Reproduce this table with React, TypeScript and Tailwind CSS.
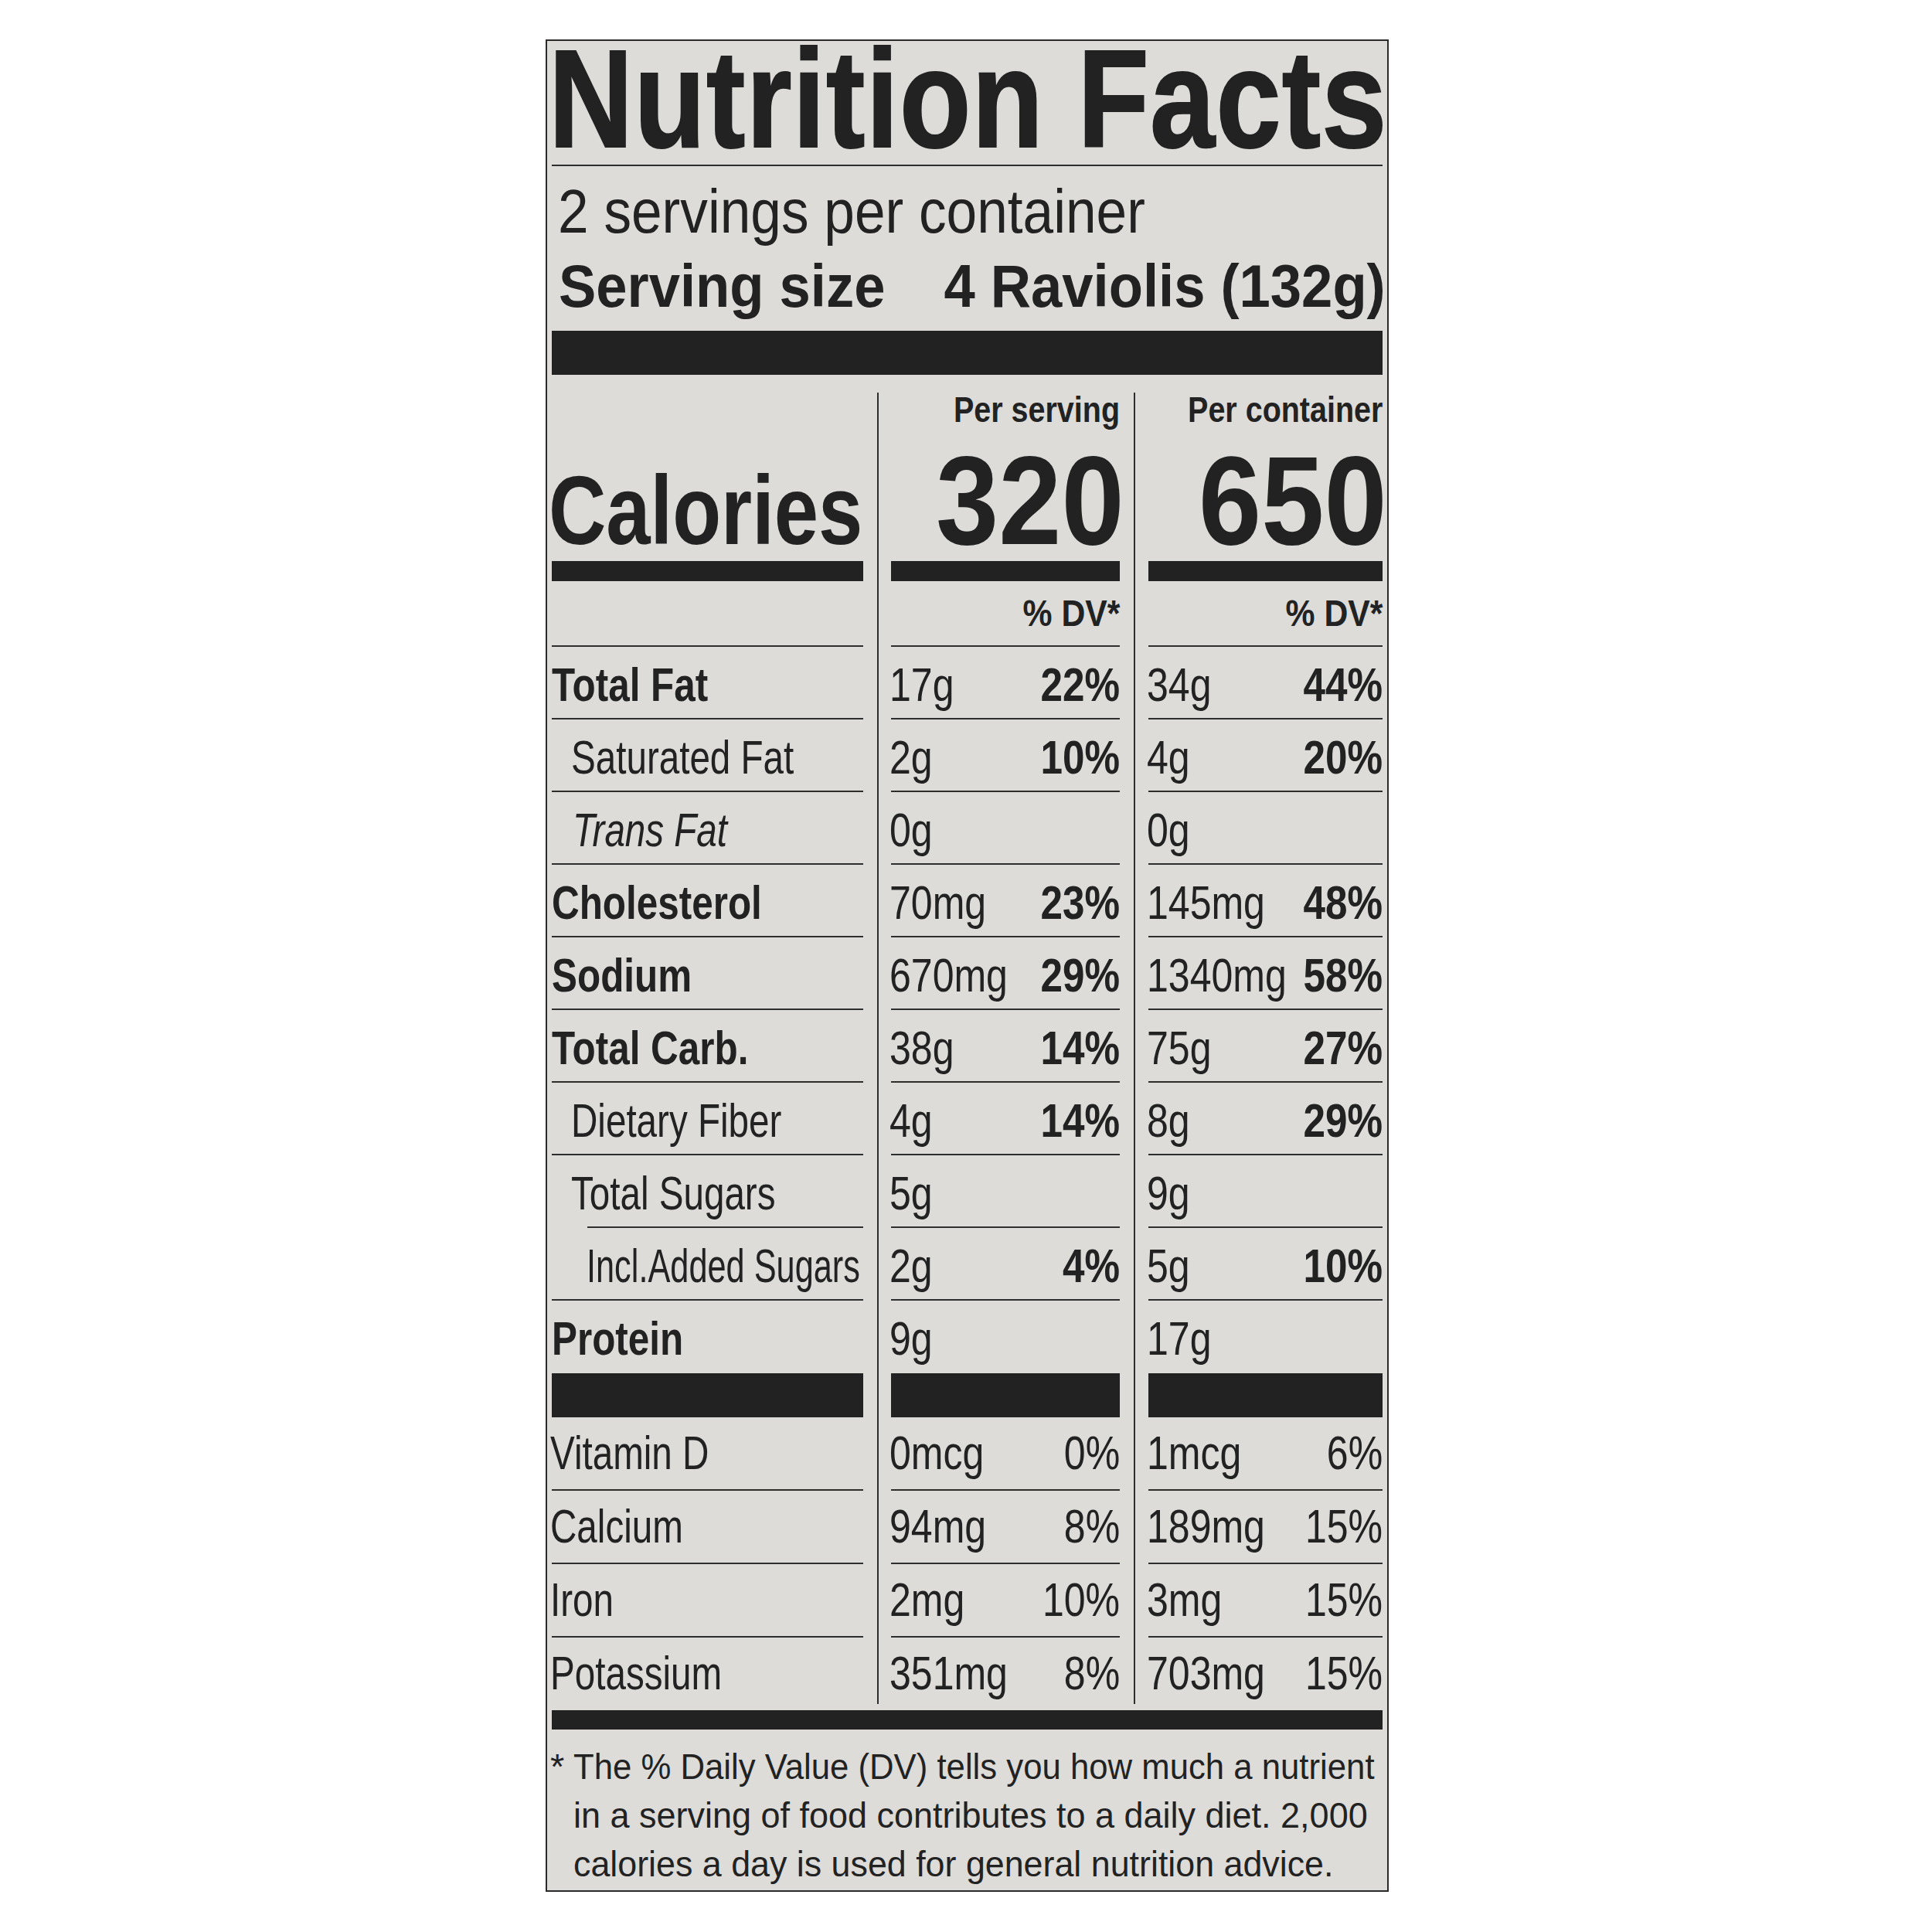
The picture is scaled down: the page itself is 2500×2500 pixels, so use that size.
import React from "react";

type Nutrient = {
  label: string;
  kind: "bold" | "indent" | "italic" | "indent2";
  v1: string;
  p1?: string;
  v2: string;
  p2?: string;
};

const nutrients: Nutrient[] = [
  { label: "Total Fat", kind: "bold", v1: "17g", p1: "22%", v2: "34g", p2: "44%" },
  { label: "Saturated Fat", kind: "indent", v1: "2g", p1: "10%", v2: "4g", p2: "20%" },
  { label: "Trans Fat", kind: "italic", v1: "0g", v2: "0g" },
  { label: "Cholesterol", kind: "bold", v1: "70mg", p1: "23%", v2: "145mg", p2: "48%" },
  { label: "Sodium", kind: "bold", v1: "670mg", p1: "29%", v2: "1340mg", p2: "58%" },
  { label: "Total Carb.", kind: "bold", v1: "38g", p1: "14%", v2: "75g", p2: "27%" },
  { label: "Dietary Fiber", kind: "indent", v1: "4g", p1: "14%", v2: "8g", p2: "29%" },
  { label: "Total Sugars", kind: "indent", v1: "5g", v2: "9g" },
  { label: "Incl.Added Sugars", kind: "indent2", v1: "2g", p1: "4%", v2: "5g", p2: "10%" },
  { label: "Protein", kind: "bold", v1: "9g", v2: "17g" },
];

const vitamins = [
  { label: "Vitamin D", v1: "0mcg", p1: "0%", v2: "1mcg", p2: "6%" },
  { label: "Calcium", v1: "94mg", p1: "8%", v2: "189mg", p2: "15%" },
  { label: "Iron", v1: "2mg", p1: "10%", v2: "3mg", p2: "15%" },
  { label: "Potassium", v1: "351mg", p1: "8%", v2: "703mg", p2: "15%" },
];

function Line({ indent }: { indent?: boolean }) {
  return <div className={indent ? "h-[2px] ml-[46px] bg-[#2e2e2e]" : "h-[2px] bg-[#2e2e2e]"} />;
}

function Cells({
  height,
  line,
  indentLine,
  c1,
  c2,
  c3,
}: {
  height: string;
  line: boolean;
  indentLine?: boolean;
  c1: React.ReactNode;
  c2: React.ReactNode;
  c3: React.ReactNode;
}) {
  return (
    <div className={`flex ${height}`}>
      <div className="w-[421px] shrink-0 pr-[18px] flex flex-col">
        <div className="flex-1 min-h-0">{c1}</div>
        {line && <Line indent={indentLine} />}
      </div>
      <div className="w-[332px] shrink-0 border-l-2 border-[#2e2e2e] pl-[16px] pr-[18px] flex flex-col">
        <div className="flex-1 min-h-0">{c2}</div>
        {line && <Line />}
      </div>
      <div className="w-[322px] shrink-0 border-l-2 border-[#2e2e2e] pl-[17px] flex flex-col">
        <div className="flex-1 min-h-0">{c3}</div>
        {line && <Line />}
      </div>
    </div>
  );
}

function Val({ v, p, boldP, pt }: { v: string; p?: string; boldP: boolean; pt: string }) {
  return (
    <div className={`flex text-[61px] leading-none ${pt}`}>
      <div className="flex-1 min-w-0 whitespace-nowrap -ml-[2px]">
        <span className="inline-block origin-left scale-x-[0.82]">{v}</span>
      </div>
      {p ? (
        <div className="shrink-0 whitespace-nowrap">
          <span
            className={
              boldP
                ? "inline-block origin-right scale-x-[0.84] font-bold"
                : "inline-block origin-right scale-x-[0.82]"
            }
          >
            {p}
          </span>
        </div>
      ) : null}
    </div>
  );
}

function Label({ n }: { n: Nutrient }) {
  if (n.kind === "bold")
    return (
      <div className="pt-[19px] text-[61px] leading-none whitespace-nowrap">
        <span className="inline-block origin-left scale-x-[0.81] font-bold">{n.label}</span>
      </div>
    );
  if (n.kind === "italic")
    return (
      <div className="pt-[19px] pl-[27px] text-[61px] leading-none whitespace-nowrap">
        <span className="inline-block origin-left scale-x-[0.78] italic">{n.label}</span>
      </div>
    );
  if (n.kind === "indent2")
    return (
      <div className="pt-[19px] pl-[45px] text-[61px] leading-none whitespace-nowrap">
        <span className="inline-block origin-left scale-x-[0.71]">{n.label}</span>
      </div>
    );
  return (
    <div className="pt-[19px] pl-[25px] text-[61px] leading-none whitespace-nowrap">
      <span className="inline-block origin-left scale-x-[0.78]">{n.label}</span>
    </div>
  );
}

function CalNum({ value }: { value: string }) {
  return (
    <span className="mt-[13px] -mr-[6px] inline-block origin-right scale-x-[0.89] text-[164px] leading-none font-bold whitespace-nowrap">
      {value}
    </span>
  );
}

export default function App() {
  return (
    <div className="w-[2500px] h-[2500px] bg-white pl-[706px] pt-[51px] font-['Liberation_Sans',Arial,sans-serif] text-[#222222]">
      <div className="w-[1091px] border-2 border-[#2a2a2a] bg-[#dddcd9] px-[6px]">
        {/* Title */}
        <div className="h-[149px] leading-[149px] text-[180px] -ml-[4px] whitespace-nowrap">
          <span className="inline-block origin-left scale-x-[0.84] font-bold tracking-[1.5px] [-webkit-text-stroke:2px_#222222]">
            Nutrition Facts
          </span>
        </div>
        <div className="mt-[11px] h-[2px] bg-[#2e2e2e]" />
        <div className="mt-[19px] pl-[8px] text-[80px] leading-none whitespace-nowrap">
          <span className="inline-block origin-left scale-x-[0.89]">2 servings per container</span>
        </div>
        <div className="mt-[18px] pl-[9px] -mr-[4px] flex justify-between text-[77px] leading-none font-bold whitespace-nowrap">
          <span className="inline-block origin-left scale-x-[0.94]">Serving size</span>
          <span className="inline-block origin-right scale-x-[0.94]">4 Raviolis (132g)</span>
        </div>
        <div className="mt-[19px] h-[57px] bg-[#222222]" />

        {/* Table */}
        <div className="mt-[23px]">
          <Cells
            height="h-[218px]"
            line={false}
            c1={
              <div className="h-full flex items-end pb-[2px] -ml-[4px] whitespace-nowrap">
                <span className="inline-block origin-left scale-x-[0.817] text-[126px] leading-none font-bold">
                  Calories
                </span>
              </div>
            }
            c2={
              <div className="h-full flex flex-col items-end">
                <span className="-mt-[2px] inline-block origin-right scale-x-[0.84] text-[47px] leading-none font-bold whitespace-nowrap">
                  Per serving
                </span>
                <CalNum value="320" />
              </div>
            }
            c3={
              <div className="h-full flex flex-col items-end">
                <span className="-mt-[2px] inline-block origin-right scale-x-[0.84] text-[47px] leading-none font-bold whitespace-nowrap">
                  Per container
                </span>
                <CalNum value="650" />
              </div>
            }
          />
          <Cells
            height="h-[26px]"
            line={false}
            c1={<div className="h-full bg-[#222222]" />}
            c2={<div className="h-full bg-[#222222]" />}
            c3={<div className="h-full bg-[#222222]" />}
          />
          <Cells
            height="h-[85px]"
            line={true}
            c1={<div />}
            c2={
              <div className="flex justify-end pt-[18px] text-[48px] leading-none font-bold whitespace-nowrap">
                <span className="inline-block origin-right scale-x-[0.89]">% DV*</span>
              </div>
            }
            c3={
              <div className="flex justify-end pt-[18px] text-[48px] leading-none font-bold whitespace-nowrap">
                <span className="inline-block origin-right scale-x-[0.89]">% DV*</span>
              </div>
            }
          />
          {nutrients.map((n, i) => (
            <Cells
              key={n.label}
              height="h-[94px]"
              line={i < nutrients.length - 1}
              indentLine={n.label === "Total Sugars"}
              c1={<Label n={n} />}
              c2={<Val v={n.v1} p={n.p1} boldP={true} pt="pt-[19px]" />}
              c3={<Val v={n.v2} p={n.p2} boldP={true} pt="pt-[19px]" />}
            />
          ))}
          <Cells
            height="h-[57px]"
            line={false}
            c1={<div className="h-full bg-[#222222]" />}
            c2={<div className="h-full bg-[#222222]" />}
            c3={<div className="h-full bg-[#222222]" />}
          />
          {vitamins.map((v, i) => (
            <Cells
              key={v.label}
              height={i < vitamins.length - 1 ? "h-[95px]" : "h-[86px]"}
              line={i < vitamins.length - 1}
              c1={
                <div className="pt-[16px] -ml-[2px] text-[61px] leading-none whitespace-nowrap">
                  <span className="inline-block origin-left scale-x-[0.78]">{v.label}</span>
                </div>
              }
              c2={<Val v={v.v1} p={v.p1} boldP={false} pt="pt-[16px]" />}
              c3={<Val v={v.v2} p={v.p2} boldP={false} pt="pt-[16px]" />}
            />
          ))}
        </div>

        <div className="mt-[8px] h-[25px] bg-[#222222]" />
        <div className="flex pt-[16px] pb-[3px] text-[47px] leading-[63px] whitespace-nowrap">
          <span className="w-[30px] shrink-0 -ml-[2px]">*</span>
          <div className="flex flex-col items-start min-w-0">
            <span className="inline-block origin-left scale-x-[0.93]">
              The % Daily Value (DV) tells you how much a nutrient
            </span>
            <span className="inline-block origin-left scale-x-[0.957]">
              in a serving of food contributes to a daily diet. 2,000
            </span>
            <span className="inline-block origin-left scale-x-[0.953]">
              calories a day is used for general nutrition advice.
            </span>
          </div>
        </div>
      </div>
    </div>
  );
}
